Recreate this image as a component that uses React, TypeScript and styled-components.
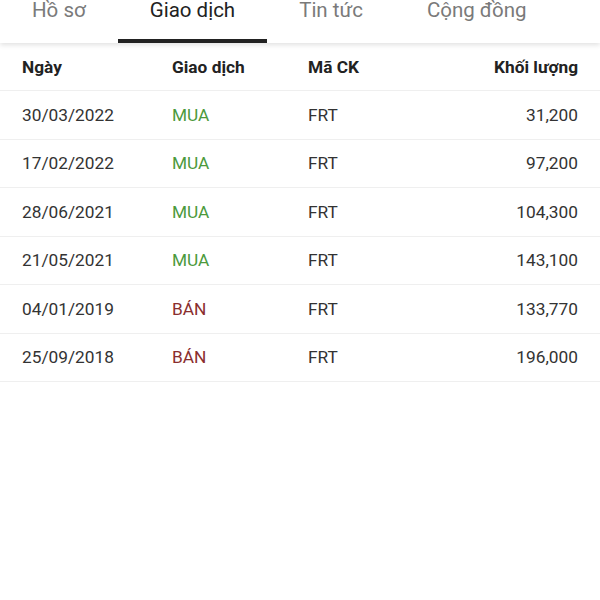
import styled, { createGlobalStyle } from "styled-components";

const GlobalStyle = createGlobalStyle`
	html, body {
		margin: 0;
		padding: 0;
		background: #ffffff;
	}
	body {
		font-family: Roboto, "Noto Sans", sans-serif;
	}
`;

const Container = styled.div`
	width: 600px;
	height: 600px;
	overflow: hidden;
	display: flex;
	flex-direction: column;
	background: #ffffff;
`;

const TabBar = styled.div`
	height: 43px;
	display: flex;
	box-shadow: 0 2px 5px rgba(0, 0, 0, 0.12);
	position: relative;
	z-index: 1;
	flex-shrink: 0;
`;

const Tab = styled.div<{ $active?: boolean }>`
	padding: 0 32px;
	display: flex;
	align-items: flex-start;
	box-sizing: border-box;
	height: 43px;
	font-size: 20.5px;
	line-height: 20px;
	color: ${(p) => (p.$active ? "#222222" : "#7a7a7a")};
	border-bottom: 4px solid ${(p) => (p.$active ? "#222222" : "transparent")};
	white-space: nowrap;
`;

const Table = styled.div`
	display: flex;
	flex-direction: column;
`;

const Row = styled.div<{ $head?: boolean }>`
	display: grid;
	grid-template-columns: 150px 136px 1fr 120px;
	align-items: center;
	height: ${(p) => (p.$head ? "48px" : "48.5px")};
	box-sizing: border-box;
	padding: 0 22px;
	border-bottom: 1px solid #efefef;
	font-size: 17.3px;
	font-weight: ${(p) => (p.$head ? 700 : 400)};
	color: ${(p) => (p.$head ? "#222222" : "#333333")};
`;

const Cell = styled.div<{ $right?: boolean }>`
	text-align: ${(p) => (p.$right ? "right" : "left")};
	white-space: nowrap;
`;

const Side = styled.div<{ $buy: boolean }>`
	color: ${(p) => (p.$buy ? "#4c9a3c" : "#8a2e2e")};
`;

const trades = [
	{ date: "30/03/2022", buy: true, code: "FRT", volume: "31,200" },
	{ date: "17/02/2022", buy: true, code: "FRT", volume: "97,200" },
	{ date: "28/06/2021", buy: true, code: "FRT", volume: "104,300" },
	{ date: "21/05/2021", buy: true, code: "FRT", volume: "143,100" },
	{ date: "04/01/2019", buy: false, code: "FRT", volume: "133,770" },
	{ date: "25/09/2018", buy: false, code: "FRT", volume: "196,000" },
];

const tabs = ["Hồ sơ", "Giao dịch", "Tin tức", "Cộng đồng"];

const App = () => {
	return (
		<Container>
			<GlobalStyle />
			<TabBar>
				{tabs.map((t, i) => (
					<Tab key={t} $active={i === 1}>
						{t}
					</Tab>
				))}
			</TabBar>
			<Table>
				<Row $head>
					<Cell>Ngày</Cell>
					<Cell>Giao dịch</Cell>
					<Cell>Mã CK</Cell>
					<Cell $right>Khối lượng</Cell>
				</Row>
				{trades.map((t) => (
					<Row key={t.date}>
						<Cell>{t.date}</Cell>
						<Side $buy={t.buy}>{t.buy ? "MUA" : "BÁN"}</Side>
						<Cell>{t.code}</Cell>
						<Cell $right>{t.volume}</Cell>
					</Row>
				))}
			</Table>
		</Container>
	);
};

export default App;
